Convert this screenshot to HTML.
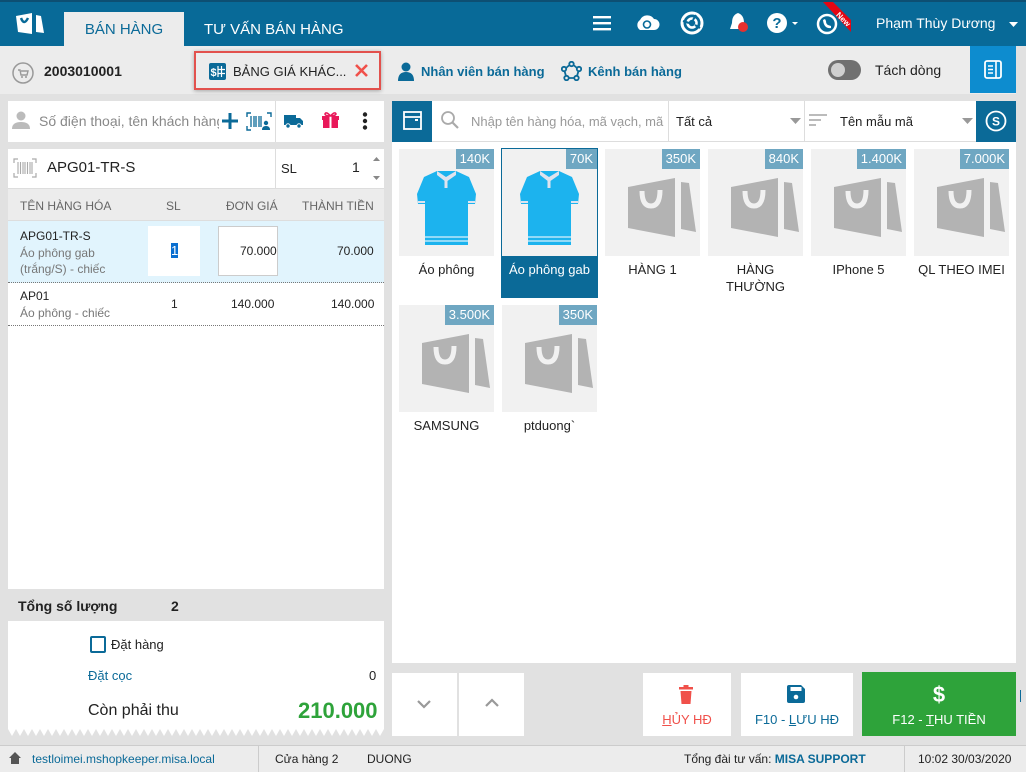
<!DOCTYPE html>
<html><head><meta charset="utf-8"><style>
*{box-sizing:border-box;margin:0;padding:0}
body{width:1026px;height:772px;overflow:hidden;background:#e1e1e1;font-family:"Liberation Sans","DejaVu Sans",sans-serif;font-size:13px;color:#222;position:relative}
.a{position:absolute}
.top{left:0;top:0;width:1026px;height:46px;background:#086a98;border-top:2px solid #0d4f73}
.tab{left:64px;top:12px;width:120px;height:34px;background:#ececec;color:#0b6a98;font-size:15px;text-align:center;line-height:36px}
.tab2{left:204px;top:12px;color:#fff;font-size:15px;line-height:36px}
.tb{left:0;top:46px;width:1016px;height:48px;background:#ececec}
.item{width:95px}
.img{width:95px;height:107px;background:#f1f1f1;position:relative}
.badge{position:absolute;right:0;top:0;height:20px;padding:0 4px;background:#6fa7c2;color:#fff;font-size:13px;line-height:20px}
.lbl{text-align:center;font-size:13px;line-height:17px;margin-top:5px;color:#222}
.hdr{font-size:12px;color:#666}
</style></head><body>
<div class="a top"></div>
<svg class="a" style="left:14px;top:10px" width="34" height="26" viewBox="0 0 34 26"><path d="M2 6 L18 3 L18 24 L4 22 Z" fill="#fff"/><path d="M22 5 L27 6 L30 23 L22 22Z" fill="#fff"/><path d="M7 8 Q10 16 14 8" stroke="#086a98" stroke-width="2.5" fill="none"/></svg>
<div class="a tab">BÁN HÀNG</div>
<div class="a tab2">TƯ VẤN BÁN HÀNG</div>
<svg class="a" style="left:593px;top:15px" width="18" height="16"><rect y="1" width="18" height="2.4" fill="#fff"/><rect y="7" width="18" height="2.4" fill="#fff"/><rect y="13" width="18" height="2.4" fill="#fff"/></svg>
<svg class="a" style="left:634px;top:12px" width="26" height="20"><path d="M6 18 A6 6 0 0 1 6 8 A8 8 0 0 1 20 7 A5.5 5.5 0 0 1 20 18 Z" fill="#fff"/><circle cx="13" cy="12.5" r="3.5" stroke="#086a98" stroke-width="1.6" fill="none"/></svg>
<svg class="a" style="left:680px;top:11px" width="24" height="24"><circle cx="12" cy="12" r="10" stroke="#fff" stroke-width="3" fill="none"/><circle cx="12" cy="12" r="4.5" stroke="#fff" stroke-width="2.5" fill="none"/><path d="M3 10 L9 12 M16 4 L13 9 M20 17 L15 14" stroke="#086a98" stroke-width="2"/></svg>
<svg class="a" style="left:728px;top:11px" width="22" height="24"><path d="M10 2 Q4 4 4 12 L2 18 L18 18 L16 12 Q16 4 10 2Z" fill="#fff"/><circle cx="15" cy="16" r="5" fill="#e5302f"/></svg>
<svg class="a" style="left:766px;top:12px" width="36" height="22"><circle cx="11" cy="11" r="10" fill="#fff"/><text x="11" y="16" font-size="15" font-weight="bold" text-anchor="middle" fill="#086a98" font-family="Liberation Sans">?</text><path d="M26 10 L32 10 L29 13Z" fill="#fff"/></svg>
<svg class="a" style="left:815px;top:2px" width="36" height="34"><circle cx="12" cy="22" r="9" stroke="#fff" stroke-width="2.5" fill="none"/><path d="M8 18 Q9 27 16 26 L16 24 L13 23 Q11 22 11 19 L10 17Z" fill="#fff"/><path d="M8 0 L18 0 L36 18 L36 30 Z" fill="#e30613"/><text x="22" y="14" font-size="8" font-weight="bold" fill="#fff" transform="rotate(45 22 12)" font-family="Liberation Sans">New</text></svg>
<div class="a" style="left:876px;top:15px;color:#fff;font-size:14px">Phạm Thùy Dương</div>
<svg class="a" style="left:1009px;top:22px" width="10" height="6"><path d="M0 0 L9 0 L4.5 5Z" fill="#fff"/></svg>

<div class="a tb"></div>
<svg class="a" style="left:12px;top:62px" width="22" height="22"><circle cx="11" cy="11" r="10" fill="none" stroke="#999" stroke-width="1.5"/><path d="M6 8 L8 8 L9 13 L15 13 L16 9 L9 9" stroke="#999" stroke-width="1.4" fill="none"/><circle cx="10" cy="15" r="1" fill="#999"/><circle cx="14" cy="15" r="1" fill="#999"/></svg>
<div class="a" style="left:44px;top:63px;font-weight:bold;font-size:14px">2003010001</div>
<div class="a" style="left:194px;top:51px;width:187px;height:39px;border:2px solid #e2514d;box-shadow:0 1px 4px rgba(0,0,0,.3)"></div>
<svg class="a" style="left:209px;top:63px" width="17" height="17"><rect width="17" height="17" rx="2" fill="#0b6a98"/><text x="4.5" y="13" font-size="11" font-weight="bold" fill="#fff" text-anchor="middle" font-family="Liberation Sans">$</text><path d="M9 3 V14 M12.5 3 V14 M9 6.5 H16 M9 10.5 H16" stroke="#fff" stroke-width="1.2"/></svg>
<div class="a" style="left:233px;top:64px;font-size:13px">BẢNG GIÁ KHÁC...</div>
<svg class="a" style="left:355px;top:64px" width="13" height="13"><path d="M1 1 L12 12 M12 1 L1 12" stroke="#f0504a" stroke-width="2.6"/></svg>
<svg class="a" style="left:397px;top:61px" width="18" height="20"><circle cx="9" cy="6" r="4.5" fill="#0b6a98"/><path d="M1 20 Q1 11 9 11 Q17 11 17 20Z" fill="#0b6a98"/></svg>
<div class="a" style="left:421px;top:64px;color:#0b6a98;font-weight:bold;font-size:13px">Nhân viên bán hàng</div>
<svg class="a" style="left:561px;top:61px" width="21" height="20"><g fill="none" stroke="#0b6a98" stroke-width="1.8"><circle cx="10.5" cy="3" r="2.2"/><circle cx="3" cy="8" r="2.2"/><circle cx="18" cy="8" r="2.2"/><circle cx="5.5" cy="17" r="2.2"/><circle cx="15.5" cy="17" r="2.2"/><path d="M8.5 4 L5 7 M12.5 4 L16 7 M3.5 10 L5 15 M17.5 10 L16 15 M7.7 17 H13.3"/></g></svg>
<div class="a" style="left:588px;top:64px;color:#0b6a98;font-weight:bold;font-size:13px">Kênh bán hàng</div>
<div class="a" style="left:828px;top:60px;width:33px;height:20px;border-radius:10px;background:#707070"></div>
<div class="a" style="left:831px;top:63px;width:14px;height:14px;border-radius:7px;background:#cfcfcf"></div>
<div class="a" style="left:875px;top:62px;font-size:14px">Tách dòng</div>
<div class="a" style="left:970px;top:46px;width:46px;height:47px;background:#0d8ccf"></div>
<svg class="a" style="left:984px;top:60px" width="18" height="19"><rect x="1" y="1" width="16" height="17" rx="2" fill="none" stroke="#fff" stroke-width="1.8"/><path d="M12 1 V18 M4 6 H9 M4 9.5 H9 M4 13 H9" stroke="#fff" stroke-width="1.6"/></svg>

<!-- left panel -->
<div class="a" style="left:8px;top:101px;width:376px;height:41px;background:#fff"></div>
<div class="a" style="left:275px;top:101px;width:1px;height:41px;background:#ddd"></div>
<svg class="a" style="left:12px;top:111px" width="18" height="19"><circle cx="9" cy="5" r="4.5" fill="#bbb"/><path d="M0 18 Q0 11 9 11 Q18 11 18 18Z" fill="#bbb"/></svg>
<div class="a" style="left:39px;top:113px;color:#888;font-size:14px;width:180px;white-space:nowrap;overflow:hidden">Số điện thoại, tên khách hàng</div>
<svg class="a" style="left:221px;top:112px" width="18" height="18"><path d="M9 1 V17 M1 9 H17" stroke="#0b6a98" stroke-width="3"/></svg>
<svg class="a" style="left:246px;top:112px" width="26" height="19"><path d="M1 5 V1 H5 M21 1 H25 V5 M1 14 V18 H5" stroke="#0b6a98" stroke-width="1.4" fill="none"/><path d="M5 4 V15 M8 4 V15 M10 4 V15 M13 4 V15 M15 4 V15" stroke="#0b6a98" stroke-width="1.3"/><circle cx="20" cy="11" r="2.2" fill="#0b6a98"/><path d="M16 18 Q16 14 20 14 Q24 14 24 18Z" fill="#0b6a98"/></svg>
<svg class="a" style="left:284px;top:113px" width="20" height="16"><path d="M0 2 H12 V12 H0Z M12 5 H16 L19 8 V12 H12Z" fill="#0b6a98"/><circle cx="4" cy="13" r="2.2" fill="#0b6a98" stroke="#fff"/><circle cx="15" cy="13" r="2.2" fill="#0b6a98" stroke="#fff"/></svg>
<svg class="a" style="left:321px;top:111px" width="19" height="18"><rect x="1" y="5" width="17" height="4" fill="#e9195a"/><rect x="2" y="9" width="15" height="8" fill="#e9195a"/><rect x="8.5" y="5" width="2" height="12" fill="#fff"/><path d="M9.5 5 Q5 0 4 3 Q4 5 9.5 5 Q14 5 15 3 Q14 0 9.5 5" fill="none" stroke="#e9195a" stroke-width="1.6"/></svg>
<svg class="a" style="left:362px;top:112px" width="6" height="19"><circle cx="3" cy="2.5" r="2.2" fill="#222"/><circle cx="3" cy="9" r="2.2" fill="#222"/><circle cx="3" cy="15.5" r="2.2" fill="#222"/></svg>

<div class="a" style="left:8px;top:149px;width:376px;height:440px;background:#fff"></div>
<div class="a" style="left:275px;top:149px;width:1px;height:39px;background:#ddd"></div>
<svg class="a" style="left:13px;top:158px" width="24" height="20"><path d="M1 5 V1 H5 M19 1 H23 V5 M1 15 V19 H5 M19 19 H23 V15" stroke="#aaa" stroke-width="1.2" fill="none"/><path d="M5 4 V16 M7.5 4 V16 M10 4 V16 M12 4 V16 M14.5 4 V16 M17 4 V16 M19 4 V16" stroke="#aaa" stroke-width="1.1"/></svg>
<div class="a" style="left:47px;top:159px;font-size:15px">APG01-TR-S</div>
<div class="a" style="left:281px;top:161px;font-size:13px">SL</div>
<div class="a" style="left:352px;top:159px;font-size:14px">1</div>
<svg class="a" style="left:372px;top:154px" width="9" height="28"><path d="M1 7 L4.5 3 L8 7Z M1 22 L4.5 26 L8 22Z" fill="#888"/></svg>
<div class="a" style="left:8px;top:188px;width:376px;height:33px;background:#ececec;border-top:1px solid #ddd;border-bottom:1px solid #ddd"></div>
<div class="a hdr" style="left:20px;top:199px">TÊN HÀNG HÓA</div>
<div class="a hdr" style="left:166px;top:199px">SL</div>
<div class="a hdr" style="left:226px;top:199px">ĐƠN GIÁ</div>
<div class="a hdr" style="left:302px;top:199px">THÀNH TIỀN</div>
<div class="a" style="left:8px;top:221px;width:376px;height:62px;background:#e1f4fd;border-bottom:1px dotted #777"></div>
<div class="a" style="left:20px;top:229px;font-size:12px">APG01-TR-S</div>
<div class="a" style="left:20px;top:245px;font-size:12px;color:#777;line-height:16px">Áo phông gab<br>(trắng/S) - chiếc</div>
<div class="a" style="left:148px;top:226px;width:52px;height:50px;background:#fff"></div>
<div class="a" style="left:171px;top:243px;background:#0a6fd0;color:#fff;font-size:13px;line-height:15px">1</div>
<div class="a" style="left:218px;top:226px;width:60px;height:50px;background:#fff;border:1px solid #ccc"></div>
<div class="a" style="left:240px;top:244px;font-size:12px">70.000</div>
<div class="a" style="left:337px;top:244px;font-size:12px">70.000</div>
<div class="a" style="left:8px;top:283px;width:376px;height:43px;border-bottom:1px dotted #777"></div>
<div class="a" style="left:20px;top:289px;font-size:12px">AP01</div>
<div class="a" style="left:20px;top:306px;font-size:12px;color:#777">Áo phông - chiếc</div>
<div class="a" style="left:171px;top:297px;font-size:12px">1</div>
<div class="a" style="left:231px;top:297px;font-size:12px">140.000</div>
<div class="a" style="left:331px;top:297px;font-size:12px">140.000</div>

<div class="a" style="left:8px;top:590px;width:376px;height:31px;background:#e1e1e1"></div>
<div class="a" style="left:18px;top:598px;font-weight:bold;font-size:14px">Tổng số lượng</div>
<div class="a" style="left:171px;top:598px;font-weight:bold;font-size:14px">2</div>
<svg class="a" style="left:8px;top:621px" width="376" height="116"><path d="M0 0 H376 V108 L372 115 L368 108 L364 115 L360 108 L356 115 L352 108 L348 115 L344 108 L340 115 L336 108 L332 115 L328 108 L324 115 L320 108 L316 115 L312 108 L308 115 L304 108 L300 115 L296 108 L292 115 L288 108 L284 115 L280 108 L276 115 L272 108 L268 115 L264 108 L260 115 L256 108 L252 115 L248 108 L244 115 L240 108 L236 115 L232 108 L228 115 L224 108 L220 115 L216 108 L212 115 L208 108 L204 115 L200 108 L196 115 L192 108 L188 115 L184 108 L180 115 L176 108 L172 115 L168 108 L164 115 L160 108 L156 115 L152 108 L148 115 L144 108 L140 115 L136 108 L132 115 L128 108 L124 115 L120 108 L116 115 L112 108 L108 115 L104 108 L100 115 L96 108 L92 115 L88 108 L84 115 L80 108 L76 115 L72 108 L68 115 L64 108 L60 115 L56 108 L52 115 L48 108 L44 115 L40 108 L36 115 L32 108 L28 115 L24 108 L20 115 L16 108 L12 115 L8 108 L4 115 L0 108 Z" fill="#fff"/></svg>
<div class="a" style="left:90px;top:636px;width:16px;height:17px;border:2px solid #0b6a98;border-radius:2px"></div>
<div class="a" style="left:111px;top:637px;font-size:13px">Đặt hàng</div>
<div class="a" style="left:88px;top:668px;font-size:13px;color:#0b6a98">Đặt cọc</div>
<div class="a" style="left:369px;top:668px;font-size:13px">0</div>
<div class="a" style="left:88px;top:702px;font-size:16px">Còn phải thu</div>
<div class="a" style="left:298px;top:698px;font-size:22px;font-weight:bold;color:#2ea33a">210.000</div>

<!-- right panel -->
<div class="a" style="left:392px;top:101px;width:624px;height:41px;background:#fff;border-bottom:1px solid #ddd"></div>
<div class="a" style="left:392px;top:101px;width:40px;height:41px;background:#0b6a98"></div>
<svg class="a" style="left:403px;top:111px" width="19" height="19"><rect x="1" y="1" width="17" height="17" fill="none" stroke="#fff" stroke-width="1.8"/><path d="M1 6 H18" stroke="#fff" stroke-width="1.8"/><rect x="12" y="8" width="3" height="2" fill="#fff"/></svg>
<svg class="a" style="left:440px;top:110px" width="20" height="20"><circle cx="8" cy="8" r="6" stroke="#aaa" stroke-width="1.8" fill="none"/><path d="M12.5 12.5 L18 18" stroke="#aaa" stroke-width="2.2"/></svg>
<div class="a" style="left:471px;top:114px;color:#999;font-size:13px;width:195px;overflow:hidden;white-space:nowrap">Nhập tên hàng hóa, mã vạch, mã</div>
<div class="a" style="left:668px;top:101px;width:1px;height:41px;background:#ddd"></div>
<div class="a" style="left:676px;top:114px;font-size:13px">Tất cả</div>
<svg class="a" style="left:790px;top:118px" width="12" height="6"><path d="M0 0 H11 L5.5 6Z" fill="#999"/></svg>
<div class="a" style="left:804px;top:101px;width:1px;height:41px;background:#ddd"></div>
<svg class="a" style="left:809px;top:114px" width="20" height="14"><path d="M0 1 H18 M0 6 H12 M0 11 H7" stroke="#bbb" stroke-width="2"/></svg>
<div class="a" style="left:840px;top:114px;font-size:13px">Tên mẫu mã</div>
<svg class="a" style="left:962px;top:118px" width="12" height="6"><path d="M0 0 H11 L5.5 6Z" fill="#999"/></svg>
<div class="a" style="left:976px;top:101px;width:40px;height:41px;background:#0b6a98"></div>
<svg class="a" style="left:985px;top:110px" width="22" height="22"><circle cx="11" cy="11" r="9.5" fill="none" stroke="#fff" stroke-width="1.8"/><text x="11" y="15.5" font-size="12" font-weight="bold" fill="#fff" text-anchor="middle" font-family="Liberation Sans">S</text></svg>
<div class="a" style="left:392px;top:142px;width:624px;height:521px;background:#fff"></div>

<svg width="0" height="0" style="position:absolute"><defs>
<symbol id="bag" viewBox="0 0 95 107"><path d="M23 38 L70 29 L70 88 L23 79Z" fill="#b3b3b3"/><path d="M76 33 L84 34 L91 83 L76 80Z" fill="#b3b3b3"/><path d="M37 42 Q37 57 46 57 Q55 57 55 41" stroke="#f1f1f1" stroke-width="5" fill="none"/></symbol>
<symbol id="shirt" viewBox="0 0 95 107"><path d="M38 22 L57 22 L70 28 L77 45 L76 55 L69 55 L69 96 L26 96 L26 55 L19 55 L18 45 L25 28Z" fill="#1cb3ee"/><path d="M38 22 L47 28 L57 22 L57 26 L47 33 L38 26Z" fill="#dfe3ee"/><rect x="45.5" y="29" width="3" height="10" fill="#dfe3ee"/><path d="M26 88 H69 M26 92 H69" stroke="#b9e7fa" stroke-width="1.5"/><path d="M19 53 H26 M69 53 H76" stroke="#dfe3ee" stroke-width="2"/></symbol>
</defs></svg>

<div class="a item" style="left:399px;top:149px"><div class="img"><svg width="95" height="107"><use href="#shirt"/></svg><div class="badge">140K</div></div><div class="lbl">Áo phông</div></div>
<div class="a" style="left:501px;top:148px;width:97px;height:150px;background:#0b6a98"></div>
<div class="a item" style="left:502px;top:149px"><div class="img"><svg width="95" height="107"><use href="#shirt"/></svg><div class="badge">70K</div></div><div class="lbl" style="color:#fff">Áo phông gab</div></div>
<div class="a item" style="left:605px;top:149px"><div class="img"><svg width="95" height="107"><use href="#bag"/></svg><div class="badge">350K</div></div><div class="lbl">HÀNG 1</div></div>
<div class="a item" style="left:708px;top:149px"><div class="img"><svg width="95" height="107"><use href="#bag"/></svg><div class="badge">840K</div></div><div class="lbl">HÀNG<br>THƯỜNG</div></div>
<div class="a item" style="left:811px;top:149px"><div class="img"><svg width="95" height="107"><use href="#bag"/></svg><div class="badge">1.400K</div></div><div class="lbl">IPhone 5</div></div>
<div class="a item" style="left:914px;top:149px"><div class="img"><svg width="95" height="107"><use href="#bag"/></svg><div class="badge">7.000K</div></div><div class="lbl">QL THEO IMEI</div></div>
<div class="a item" style="left:399px;top:305px"><div class="img"><svg width="95" height="107"><use href="#bag"/></svg><div class="badge">3.500K</div></div><div class="lbl">SAMSUNG</div></div>
<div class="a item" style="left:502px;top:305px"><div class="img"><svg width="95" height="107"><use href="#bag"/></svg><div class="badge">350K</div></div><div class="lbl">ptduong`</div></div>

<!-- buttons -->
<div class="a" style="left:392px;top:673px;width:65px;height:63px;background:#fff"></div>
<svg class="a" style="left:417px;top:699px" width="14" height="10"><path d="M1 2 L7 8 L13 2" stroke="#999" stroke-width="2.2" fill="none"/></svg>
<div class="a" style="left:459px;top:673px;width:65px;height:63px;background:#fff"></div>
<svg class="a" style="left:485px;top:698px" width="14" height="10"><path d="M1 8 L7 2 L13 8" stroke="#999" stroke-width="2.2" fill="none"/></svg>
<div class="a" style="left:643px;top:673px;width:88px;height:63px;background:#fff"></div>
<svg class="a" style="left:679px;top:685px" width="14" height="19"><rect x="0" y="2" width="14" height="2.5" fill="#f0504a"/><rect x="4.5" y="0" width="5" height="2" fill="#f0504a"/><path d="M1.5 6 H12.5 L11.5 19 H2.5Z" fill="#f0504a"/></svg>
<div class="a" style="left:643px;top:712px;width:88px;text-align:center;color:#f0504a;font-size:13px"><u>H</u>ỦY HĐ</div>
<div class="a" style="left:741px;top:673px;width:112px;height:63px;background:#fff"></div>
<svg class="a" style="left:787px;top:685px" width="18" height="18"><path d="M0 2 Q0 0 2 0 H14 L18 4 V16 Q18 18 16 18 H2 Q0 18 0 16Z" fill="#0b6a98"/><rect x="3.5" y="2" width="11" height="4" fill="#fff"/><circle cx="9" cy="12" r="2.3" fill="#fff"/></svg>
<div class="a" style="left:741px;top:712px;width:112px;text-align:center;color:#0b6a98;font-size:13px">F10 - <u>L</u>ƯU HĐ</div>
<div class="a" style="left:862px;top:672px;width:154px;height:64px;background:#2ea33a"></div>
<div class="a" style="left:862px;top:682px;width:154px;text-align:center;color:#fff;font-size:22px;font-weight:bold">$</div>
<div class="a" style="left:862px;top:712px;width:154px;text-align:center;color:#fff;font-size:13px">F12 - <u>T</u>HU TIỀN</div>
<div class="a" style="left:1020px;top:690px;width:1px;height:12px;background:#0b6a98"></div>

<!-- status bar -->
<div class="a" style="left:0;top:745px;width:1026px;height:27px;background:#ececec;border-top:1px solid #ccc"></div>
<div class="a" style="left:258px;top:746px;width:1px;height:26px;background:#ccc"></div>
<div class="a" style="left:904px;top:746px;width:1px;height:26px;background:#ccc"></div>
<svg class="a" style="left:9px;top:752px" width="12" height="12"><path d="M6 0 L12 6 H10 V12 H2 V6 H0Z" fill="#555"/></svg>
<div class="a" style="left:32px;top:752px;color:#0b6a98;font-size:12px">testloimei.mshopkeeper.misa.local</div>
<div class="a" style="left:275px;top:752px;font-size:12px">Cửa hàng 2</div>
<div class="a" style="left:367px;top:752px;font-size:12px">DUONG</div>
<div class="a" style="left:684px;top:752px;font-size:12px">Tổng đài tư vấn: <b style="color:#0b6a98">MISA SUPPORT</b></div>
<div class="a" style="left:918px;top:752px;font-size:12px">10:02 30/03/2020</div>
</body></html>
